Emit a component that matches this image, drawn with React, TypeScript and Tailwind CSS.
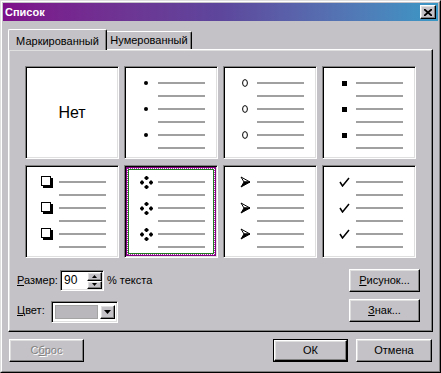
import React from "react";

const face = "bg-[#c4c2c6]";
const raised =
  "border border-t-white border-l-white border-r-black border-b-black shadow-[inset_-1px_-1px_0_#808080,inset_1px_1px_0_#dfdfdf]";
const sunken =
  "border border-t-[#808080] border-l-[#808080] border-r-white border-b-white shadow-[inset_1px_1px_0_#000,inset_-1px_-1px_0_#dfdfdf]";

function Line() {
  return <div className="w-[47px] h-[2px] bg-[#a0a0a0]" />;
}

function Cell({ bullet, selected }: { bullet: React.ReactNode; selected?: boolean }) {
  return (
    <div className={`relative bg-white ${sunken}`}>
      {selected && (
        <div className="absolute inset-[1px] border border-[#800080]">
          <div className="h-full border border-dotted border-[#a020a0]">
            <div className="h-full border border-[#208020]" />
          </div>
        </div>
      )}
      <div className="flex flex-col pt-[9px] pl-[13px]">
        {[0, 1, 2].map((i) => (
          <div key={i}>
            <div className="flex h-[14px] items-center gap-[4px]">
              <div className="w-[16px] flex justify-center">{bullet}</div>
              <Line />
            </div>
            <div className="flex h-[12px] items-center pl-[20px]">
              <Line />
            </div>
          </div>
        ))}
      </div>
    </div>
  );
}

const Dot = <div className="w-[4px] h-[4px] rounded-full bg-black" />;
const Ring = (
  <svg width="6" height="8" viewBox="0 0 6 8">
    <ellipse cx="3" cy="4" rx="2.4" ry="3.4" fill="none" stroke="black" strokeWidth="1" />
  </svg>
);
const Square = <div className="w-[5px] h-[5px] bg-black" />;
const Box = (
  <svg width="12" height="12" viewBox="0 0 12 12">
    <rect x="0.5" y="0.5" width="9" height="9" fill="white" stroke="black" />
    <rect x="10" y="2" width="2" height="10" fill="black" />
    <rect x="2" y="10" width="10" height="2" fill="black" />
  </svg>
);
const Diamonds = (
  <svg width="13" height="13" viewBox="0 0 13 13">
    {[
      [6.5, 2],
      [2, 6.5],
      [11, 6.5],
      [6.5, 11],
    ].map(([x, y]) => (
      <g key={`${x}-${y}`} fill="black">
        <rect x={x - 2} y={y - 1} width="4" height="2" />
        <rect x={x - 1} y={y - 2} width="2" height="4" />
      </g>
    ))}
  </svg>
);
const Arrow = (
  <svg width="11" height="12" viewBox="0 0 11 12">
    <path d="M1 1 L10 6 L4 6 Z" fill="white" stroke="black" strokeWidth="1" />
    <path d="M4 6 L10 6 L1 11 Z" fill="black" stroke="black" strokeWidth="1" />
  </svg>
);
const Check = (
  <svg width="11" height="10" viewBox="0 0 11 10">
    <path d="M1 5 L3.5 9 L10 1" fill="none" stroke="black" strokeWidth="1.5" />
  </svg>
);

function Btn({ children, className = "" }: { children: React.ReactNode; className?: string }) {
  return (
    <div className={`flex items-center justify-center ${face} ${raised} ${className}`}>{children}</div>
  );
}

export default function App() {
  return (
    <div
      className={`w-[441px] h-[373px] font-['Liberation_Sans',Arial,sans-serif] text-[11px] text-black ${face} border border-t-[#dfdfdf] border-l-[#dfdfdf] border-r-black border-b-black`}
    >
      <div className="h-full flex flex-col p-px border border-t-white border-l-white border-r-[#808080] border-b-[#808080]">
        {/* title bar */}
        <div className="h-[18px] flex items-center justify-between pl-[2px] pr-[2px] bg-linear-to-r from-[#7e0e8a] via-[#5d469c] to-[#3898c6]">
          <span className="text-white font-bold text-[11px]">Список</span>
          <Btn className="w-[16px] h-[14px]">
            <svg width="8" height="7" viewBox="0 0 8 7">
              <path d="M0 0 L8 7 M8 0 L0 7" stroke="black" strokeWidth="1.8" />
            </svg>
          </Btn>
        </div>

        {/* tabs */}
        <div className="mt-[8px] px-[5px]">
          <div className="relative z-10 flex items-end h-[20px]">
            <div
              className={`w-[99px] h-[21px] -mb-px ${face} rounded-t-[2px] border-t border-l border-r border-t-white border-l-white border-r-black shadow-[inset_-1px_0_0_#808080] flex items-start justify-center pt-[3px]`}
            >
              Маркированный
            </div>
            <div
              className={`w-[85px] h-[18px] ${face} rounded-tr-[2px] border-t border-r border-t-white border-r-black shadow-[inset_-1px_0_0_#808080] flex items-center justify-center`}
            >
              Нумерованный
            </div>
          </div>

          {/* panel */}
          <div className="h-[283px] border border-t-white border-l-white border-r-black border-b-black shadow-[inset_-1px_-1px_0_#808080,inset_1px_1px_0_#dfdfdf] pt-[16px] pl-[8px] pr-[12px]">
            <div className="ml-[8px] grid grid-cols-[repeat(4,94px)] grid-rows-[repeat(2,93px)] gap-x-[5px] gap-y-[6px]">
              <div className={`bg-white ${sunken} flex items-center justify-center text-[16px]`}>Нет</div>
              <Cell bullet={Dot} />
              <Cell bullet={Ring} />
              <Cell bullet={Square} />
              <Cell bullet={Box} />
              <Cell bullet={Diamonds} selected />
              <Cell bullet={Arrow} />
              <Cell bullet={Check} />
            </div>

            <div className="mt-[11px] h-[23px] flex items-center justify-between">
              <div className="flex items-center">
                <span className="w-[43px]">
                  <span className="underline">Р</span>азмер:
                </span>
                <div className={`w-[44px] h-[21px] bg-white flex ${sunken}`}>
                  <span className="flex-1 pl-[3px] pt-[1px] text-[12px] leading-[17px]">90</span>
                  <div className="w-[16px] flex flex-col pr-px pt-px pb-px">
                    <Btn className="h-[9px]">
                      <svg width="5" height="3" viewBox="0 0 5 3">
                        <path d="M2.5 0 L5 3 L0 3 Z" fill="black" />
                      </svg>
                    </Btn>
                    <Btn className="h-[9px]">
                      <svg width="5" height="3" viewBox="0 0 5 3">
                        <path d="M0 0 L5 0 L2.5 3 Z" fill="black" />
                      </svg>
                    </Btn>
                  </div>
                </div>
                <span className="ml-[3px]">% текста</span>
              </div>
              <Btn className="w-[71px] h-[23px]">
                <span>
                  <span className="underline">Р</span>исунок...
                </span>
              </Btn>
            </div>

            <div className="mt-[7px] h-[23px] flex items-center justify-between">
              <div className="flex items-center">
                <span className="w-[34px]">
                  <span className="underline">Ц</span>вет:
                </span>
                <div className={`w-[67px] h-[22px] mt-[3px] bg-white flex p-[3px] pr-[2px] ${sunken}`}>
                  <div className="flex-1 bg-[#b9b7bb] border border-[#a4a4a4]" />
                  <Btn className="w-[15px] ml-[2px]">
                    <svg width="7" height="4" viewBox="0 0 7 4">
                      <path d="M0 0 L7 0 L3.5 4 Z" fill="black" />
                    </svg>
                  </Btn>
                </div>
              </div>
              <Btn className="w-[71px] h-[23px]">
                <span>
                  <span className="underline">З</span>нак...
                </span>
              </Btn>
            </div>
          </div>
        </div>

        {/* bottom buttons */}
        <div className="mt-[7px] pl-[6px] pr-[6px] flex items-center justify-between">
          <Btn className="w-[75px] h-[23px]">
            <span className="text-[#808080] [text-shadow:1px_1px_0_#fff]">
              С<span className="underline">б</span>рос
            </span>
          </Btn>
          <div className="flex gap-[8px]">
            <div className="w-[75px] h-[23px] border border-black flex">
              <Btn className="flex-1">ОК</Btn>
            </div>
            <Btn className="w-[76px] h-[23px]">Отмена</Btn>
          </div>
        </div>
      </div>
    </div>
  );
}
